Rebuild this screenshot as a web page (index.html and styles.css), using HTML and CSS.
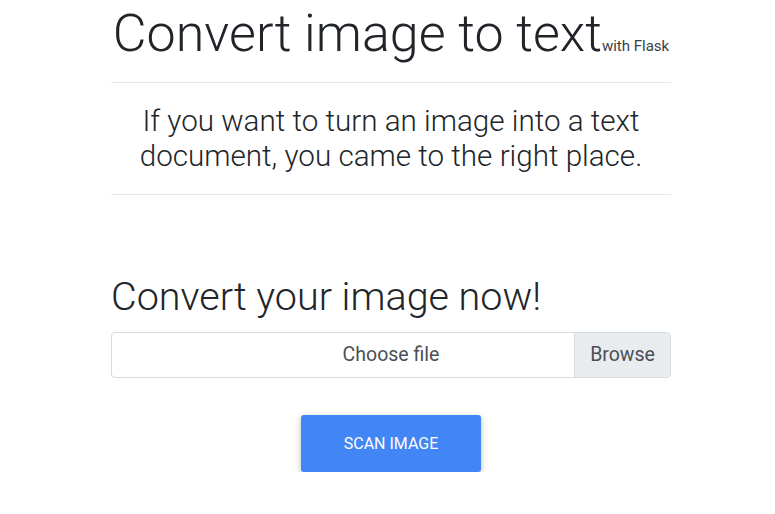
FILE: index.html
```html
<!DOCTYPE html>
<html lang="en">
<head>
<meta charset="utf-8">
<title>Convert image to text</title>
<link rel="stylesheet" href="styles.css">
</head>
<body>
<main class="container">
  <h1 class="title">Convert image to text<span class="title-small">with Flask</span></h1>
  <hr class="rule">
  <p class="lead">If you want to turn an image into a text document, you came to the right place.</p>
  <hr class="rule">
  <h2 class="subtitle">Convert your image now!</h2>
  <form class="upload">
    <label class="file">
      <input class="file-input" type="file">
      <span class="file-label">Choose file</span>
      <span class="file-browse">Browse</span>
    </label>
    <div class="actions">
      <button class="btn-scan" type="button">Scan image</button>
    </div>
  </form>
</main>
</body>
</html>
```
FILE: styles.css
```css
* { box-sizing: border-box; }
html, body { margin: 0; padding: 0; background: #fff; }
body {
  font-family: Roboto, "Liberation Sans", sans-serif;
  color: #212529;
}
.container {
  width: 560px;
  margin-left: 111px;
}
.title {
  margin: 0;
  font-size: 52px;
  font-weight: 300;
  line-height: 67px;
  text-align: center;
  white-space: nowrap;
}
.title-small {
  font-size: 15px;
  font-weight: 400;
  color: #3a3f44;
  line-height: 1;
}
.rule {
  margin: 0;
  border: 0;
  border-top: 1px solid rgba(0,0,0,0.1);
}
.title + .rule { margin-top: 15px; }
.lead {
  margin: 21px 0 20px;
  font-size: 29.6px;
  font-weight: 300;
  line-height: 35px;
  text-align: center;
}
.subtitle {
  margin: 78px 0 11px;
  font-size: 39.5px;
  font-weight: 300;
  line-height: 48px;
}
.upload { display: flex; flex-direction: column; }
.file {
  position: relative;
  display: block;
  height: 46px;
  border: 1px solid #d7dce1;
  border-radius: 4px;
  background: #fff;
  overflow: hidden;
}
.file-input { display: none; }
.file-label {
  display: block;
  text-align: center;
  font-size: 19.5px;
  line-height: 44px;
  color: #495057;
}
.file-browse {
  position: absolute;
  top: 0;
  right: 0;
  bottom: 0;
  width: 96px;
  border-left: 1px solid #d7dce1;
  background: #e9ecef;
  color: #495057;
  font-size: 19.5px;
  line-height: 44px;
  text-align: center;
}
.actions {
  display: flex;
  justify-content: center;
  margin-top: 37px;
}
.btn-scan {
  width: 180px;
  height: 57px;
  border: 0;
  border-radius: 3px;
  background: #4285f4;
  color: #fff;
  font-family: Roboto, "Liberation Sans", sans-serif;
  font-size: 16px;
  font-weight: 400;
  text-transform: uppercase;
  box-shadow: 0 2px 5px 0 rgba(0,0,0,0.16), 0 2px 10px 0 rgba(0,0,0,0.12);
  cursor: pointer;
}
```
